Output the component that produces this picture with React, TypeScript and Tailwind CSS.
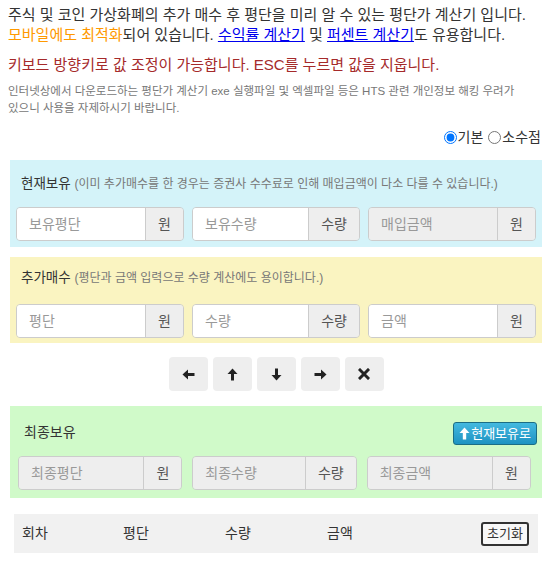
import React from "react";

const font = { fontFamily: '"Liberation Sans", "Noto Sans CJK KR", sans-serif' };

function Group({ placeholder, unit, readOnly }: { placeholder: string; unit: string; readOnly?: boolean }) {
  return (
    <div className="flex h-[34px] rounded-[4px] border border-[#ccc] overflow-hidden">
      <input
        readOnly={readOnly}
        placeholder={placeholder}
        className={`min-w-0 flex-1 px-3 text-[14px] text-[#555] outline-none placeholder:text-[#999] ${readOnly ? "bg-[#eee]" : "bg-white"}`}
        style={font}
      />
      <span className="flex items-center justify-center border-l border-[#ccc] bg-[#eee] px-3 text-[14px] text-[#555]">
        {unit}
      </span>
    </div>
  );
}

function Arrow({ dir }: { dir: "left" | "up" | "down" | "right" | "x" }) {
  if (dir === "x")
    return (
      <svg width="12" height="12" viewBox="0 0 12 12">
        <path d="M2 2 L10 10 M10 2 L2 10" stroke="#222" strokeWidth="3" strokeLinecap="square" />
      </svg>
    );
  const rot = { left: 0, up: 90, right: 180, down: 270 }[dir];
  return (
    <svg width="13" height="13" viewBox="0 0 13 13" style={{ transform: `rotate(${rot}deg)` }}>
      <polygon points="0.5,6.5 6,1.5 6,11.5" fill="#222" />
      <rect x="5" y="5" width="7.5" height="3" fill="#222" />
    </svg>
  );
}

export default function App() {
  return (
    <div className="w-[552px] bg-white pb-2 text-[#333]" style={font}>
      <div className="px-2 pt-[5px] text-[15px] leading-[20px]">
        <p>주식 및 코인 가상화폐의 추가 매수 후 평단을 미리 알 수 있는 평단가 계산기 입니다.</p>
        <p>
          <span className="text-[#ff9900]">모바일에도 최적화</span>되어 있습니다.{" "}
          <a className="text-[#0000ee] underline">수익률 계산기</a> 및{" "}
          <a className="text-[#0000ee] underline">퍼센트 계산기</a>도 유용합니다.
        </p>
        <p className="mt-[10px] text-[#a52a2a]">키보드 방향키로 값 조정이 가능합니다. ESC를 누르면 값을 지웁니다.</p>
        <p className="mt-[8px] break-keep pr-[20px] text-[11.5px] leading-[17px] text-[#777]">
          인터넷상에서 다운로드하는 평단가 계산기 exe 실행파일 및 엑셀파일 등은 HTS 관련 개인정보 해킹 우려가 있으니 사용을 자제하시기 바랍니다.
        </p>
      </div>

      <div className="mt-[10px] flex justify-end gap-[5px] pr-[11px] text-[14px]">
        <label className="flex items-center">
          <input type="radio" name="mode" defaultChecked className="m-0 mr-[1px] h-[13px] w-[13px]" />
          기본
        </label>
        <label className="flex items-center">
          <input type="radio" name="mode" className="m-0 mr-[1px] h-[13px] w-[13px]" />
          소수점
        </label>
      </div>

      <div className="mx-[10px] mt-[12px] bg-[#d4f3f9] px-[6px] pb-[6px] pt-[15px]">
        <div className="whitespace-nowrap px-[5px] text-[13.5px] leading-[18px]">
          현재보유 <span className="text-[12px] text-[#777]">(이미 추가매수를 한 경우는 증권사 수수료로 인해 매입금액이 다소 다를 수 있습니다.)</span>
        </div>
        <div className="mt-[14px] grid grid-cols-3 gap-2">
          <Group placeholder="보유평단" unit="원" />
          <Group placeholder="보유수량" unit="수량" />
          <Group placeholder="매입금액" unit="원" readOnly />
        </div>
      </div>

      <div className="mx-[10px] mt-[10px] bg-[#faf4c1] px-[6px] pb-[5px] pt-[12px]">
        <div className="px-[5px] text-[13.5px] leading-[18px]">
          추가매수 <span className="text-[12px] text-[#777]">(평단과 금액 입력으로 수량 계산에도 용이합니다.)</span>
        </div>
        <div className="mt-[17px] grid grid-cols-3 gap-2">
          <Group placeholder="평단" unit="원" />
          <Group placeholder="수량" unit="수량" />
          <Group placeholder="금액" unit="원" />
        </div>
      </div>

      <div className="mt-[14px] flex justify-center gap-[5px]">
        {(["left", "up", "down", "right", "x"] as const).map((d) => (
          <button key={d} className="flex h-[34px] w-[39px] items-center justify-center rounded-[4px] bg-[#eee]">
            <Arrow dir={d} />
          </button>
        ))}
      </div>

      <div className="mx-[10px] mt-[15px] bg-[#d0fac9] pb-[8px] pl-[8px] pr-[11px] pt-[16px]">
        <div className="flex items-start justify-between">
          <span className="pl-[6px] pt-[1px] text-[14px] leading-[18px]">최종보유</span>
          <button className="-mr-[6px] flex h-[23px] items-center gap-[1px] rounded-[3px] border border-[#1b6d85] bg-gradient-to-b from-[#43b9e0] to-[#1d93c2] px-[5px] text-[13px] text-white">
            <svg width="11" height="13" viewBox="0 0 11 13">
              <polygon points="5.5,0.5 10.5,6 0.5,6" fill="#fff" />
              <rect x="3.8" y="5" width="3.4" height="7.5" fill="#fff" />
            </svg>
            현재보유로
          </button>
        </div>
        <div className="mt-[11px] grid grid-cols-3 gap-[10px]">
          <Group placeholder="최종평단" unit="원" readOnly />
          <Group placeholder="최종수량" unit="수량" readOnly />
          <Group placeholder="최종금액" unit="원" readOnly />
        </div>
      </div>

      <div className="mx-[14px] mt-[16px] flex h-[39px] items-center bg-[#f1f1f1] pl-[8px] pr-[9px] text-[14px]">
        <span className="w-[101px]">회차</span>
        <span className="w-[102px]">평단</span>
        <span className="w-[102px]">수량</span>
        <span className="flex-1">금액</span>
        <button className="h-[24px] w-[48px] rounded-[3px] border-2 border-[#333] bg-[#f8f8f8] text-[13px]">초기화</button>
      </div>
    </div>
  );
}
